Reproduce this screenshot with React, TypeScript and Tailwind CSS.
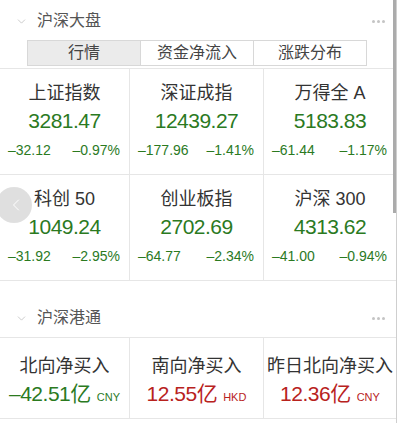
import { ChevronDown, ChevronLeft } from 'lucide-react'

const FONT = "[font-family:'Liberation_Sans','Noto_Sans_CJK_SC',sans-serif]"

// ── Index quotes ───────────────────────────────────────────────
const INDICES = [
  { name: '上证指数', value: '3281.47', chg: '–32.12', pct: '–0.97%' },
  { name: '深证成指', value: '12439.27', chg: '–177.96', pct: '–1.41%' },
  { name: '万得全 A', value: '5183.83', chg: '–61.44', pct: '–1.17%' },
  { name: '科创 50', value: '1049.24', chg: '–31.92', pct: '–2.95%' },
  { name: '创业板指', value: '2702.69', chg: '–64.77', pct: '–2.34%' },
  { name: '沪深 300', value: '4313.62', chg: '–41.00', pct: '–0.94%' },
]

const FLOWS = [
  { name: '北向净买入', value: '–42.51亿', unit: 'CNY', up: false },
  { name: '南向净买入', value: '12.55亿', unit: 'HKD', up: true },
  { name: '昨日北向净买入', value: '12.36亿', unit: 'CNY', up: true },
]

const TABS = ['行情', '资金净流入', '涨跌分布']

function SectionHeader({ title }: { title: string }) {
  return (
    <div className="flex h-[38px] items-center pl-[15px] pr-[11px]">
      <ChevronDown className="h-[13px] w-[13px] text-[#b0b0b0]" strokeWidth={1.2} />
      <span className="ml-[9px] text-[16px] text-[#555]">{title}</span>
      <div className="ml-auto flex gap-[2px]">
        <span className="h-[3px] w-[3px] rounded-full bg-[#c4c4c4]" />
        <span className="h-[3px] w-[3px] rounded-full bg-[#c4c4c4]" />
        <span className="h-[3px] w-[3px] rounded-full bg-[#c4c4c4]" />
      </div>
    </div>
  )
}

export default function App() {
  return (
    <div className={`relative h-[423px] w-[406px] overflow-hidden bg-white ${FONT}`}>
      <div className="h-full w-[397px] border-r border-[#cfcfcf]">
        {/* ── 沪深大盘 ───────────────────────── */}
        <div className="pt-[2px]">
          <SectionHeader title="沪深大盘" />
        </div>
        <div className="ml-[27px] flex h-[26px] w-[340px] border border-[#d8d8d8] text-[16px] text-[#444]">
          {TABS.map((t, i) => (
            <div
              key={t}
              className={
                i === 0
                  ? 'flex flex-1 items-center justify-center bg-[#ebebeb]'
                  : 'flex flex-1 items-center justify-center border-l border-[#d8d8d8]'
              }
            >
              {t}
            </div>
          ))}
        </div>
        <div className="h-[3px] border-b border-[#e6e6e6]" />

        <div className="grid grid-cols-[130px_134px_1fr]">
          {INDICES.map((it, i) => (
            <div
              key={it.name}
              className={
                i % 3 === 2
                  ? 'flex h-[106px] flex-col items-center border-b border-[#e6e6e6]'
                  : 'flex h-[106px] flex-col items-center border-b border-r border-[#e6e6e6]'
              }
            >
              <div className="pt-[12px] text-[18px] leading-[24px] text-[#333]">{it.name}</div>
              <div className="mt-[2px] text-[21px] leading-[28px] tracking-[-0.5px] text-[#2b7a1f]">
                {it.value}
              </div>
              <div className="mt-[6px] flex w-full justify-between pl-[8px] pr-[9px] text-[14px] leading-[18px] text-[#2b7a1f]">
                <span>{it.chg}</span>
                <span>{it.pct}</span>
              </div>
            </div>
          ))}
        </div>

        {/* ── 沪深港通 ───────────────────────── */}
        <div className="h-[18px]" />
        <div className="border-b border-[#e6e6e6]">
          <SectionHeader title="沪深港通" />
        </div>
        <div className="grid grid-cols-[130px_134px_1fr]">
          {FLOWS.map((f, i) => (
            <div
              key={f.name}
              className={
                i === 2
                  ? 'flex h-[81px] flex-col items-center border-b border-[#e6e6e6]'
                  : 'flex h-[81px] flex-col items-center border-b border-r border-[#e6e6e6]'
              }
            >
              <div className="pt-[16px] text-[18px] leading-[24px] text-[#333]">{f.name}</div>
              <div
                className={
                  f.up
                    ? 'mt-[2px] flex items-baseline text-[#b8221d]'
                    : 'mt-[2px] flex items-baseline text-[#2b7a1f]'
                }
              >
                <span className="text-[21px] leading-[28px] tracking-[-0.5px]">{f.value}</span>
                <span className="ml-[6px] text-[11px]">{f.unit}</span>
              </div>
            </div>
          ))}
        </div>
      </div>

      {/* scrollbar thumb */}
      <div className="absolute right-[10px] top-0 h-[213px] w-[3px] bg-[#ababab]" />

      {/* carousel back button */}
      <div className="absolute left-[-4px] top-[187px] flex h-[36px] w-[36px] items-center justify-center rounded-full bg-[#dcdcdc]/90">
        <ChevronLeft className="ml-[4px] h-[20px] w-[20px] text-white" strokeWidth={1.2} />
      </div>
    </div>
  )
}
